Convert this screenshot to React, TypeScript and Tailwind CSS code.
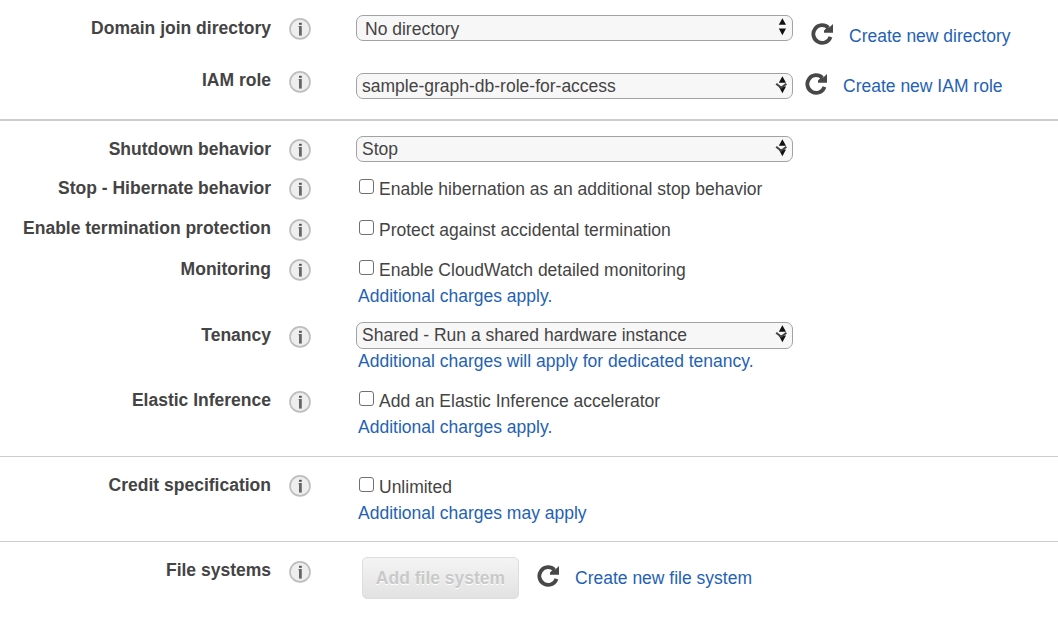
import React from "react";

function InfoIcon({ className }: { className: string }) {
  return (
    <svg className={`ml-[18px] h-[23px] w-[23px] shrink-0 ${className}`} viewBox="0 0 23 23" role="img" aria-label="Info">
      <circle cx="11" cy="10.9" r="10" fill="#eeeeee" stroke="#bebebe" strokeWidth="1.7" />
      <rect x="10" y="4.8" width="2.8" height="2" fill="#555" />
      <path d="M9.2 8h1v1.3h-1z" fill="#aaa" />
      <path d="M10 8h2.8v9.6H10z" fill="#666" />
    </svg>
  );
}

function RefreshIcon({ className }: { className: string }) {
  return (
    <svg className={`h-[23px] w-[23px] shrink-0 ${className}`} viewBox="0 0 23 23" role="img" aria-label="Refresh">
      <path d="M17.4 5.8A8.8 8.8 0 1 0 19.5 14.8" fill="none" stroke="#484848" strokeWidth="3.8" />
      <path d="M22 2V10.7H13V8.6L15.6 6L18.6 5.2z" fill="#484848" />
    </svg>
  );
}

function Select({ children, plain, className }: { children: React.ReactNode; plain?: boolean; className: string }) {
  return (
    <button
      type="button"
      className={`flex w-[437px] shrink-0 items-start justify-between rounded-[7px] border border-[#a2a2a2] bg-[#f7f7f7] pr-[3px] leading-6 ${className}`}
    >
      <span className={plain ? "mt-px" : ""}>{children}</span>
      <svg className="h-[22px] w-[14px] shrink-0" viewBox="0 0 14 22" aria-hidden="true">
        <path d="M7.4 2.3L11 8.8H3.8zM3.8 12.6H11L7.4 19.2z" fill="#111" />
        {!plain && <path d="M1.2 9.7L6.2 13.8L11.4 9.7" fill="none" stroke="#444" strokeWidth="2" />}
      </svg>
    </button>
  );
}

function Check({ children, className }: { children: React.ReactNode; className: string }) {
  return (
    <label className={`flex h-[26px] items-start leading-[26px] ${className}`}>
      <input
        type="checkbox"
        className="mt-[3px] mr-[5px] ml-[3px] h-[15px] w-[15px] shrink-0 appearance-none rounded-[3px] border border-[#707070] bg-white"
      />
      <span>{children}</span>
    </label>
  );
}

function Link({ children, className = "" }: { children: React.ReactNode; className?: string }) {
  return (
    <a href="#" className={`block leading-[26px] text-[#1f62b5] ${className}`}>
      {children}
    </a>
  );
}

function Row({ label, height, icon, children }: { label: string; height: string; icon: string; children: React.ReactNode }) {
  return (
    <div className={`flex items-start ${height}`}>
      <div className="w-[271px] shrink-0 text-right leading-6 font-bold">{label}</div>
      <InfoIcon className={icon} />
      <div className="ml-11 min-w-0 grow">{children}</div>
    </div>
  );
}

export default function App() {
  return (
    <main className="h-[620px] w-[1058px] overflow-hidden bg-white font-['Liberation_Sans',Arial,sans-serif] text-[17.5px] whitespace-nowrap text-[#444]">
      <section className="h-[121px] border-b-2 border-[#ccc] pt-4">
        <Row label="Domain join directory" height="h-[52px]" icon="mt-[2px]">
          <div className="-mt-px flex items-start">
            <Select plain className="h-[26px] pl-2">No directory</Select>
            <RefreshIcon className="mt-[7px] ml-[18px]" />
            <Link className="mt-2 ml-[15px]">Create new directory</Link>
          </div>
        </Row>
        <Row label="IAM role" height="h-[51px]" icon="mt-[3px]">
          <div className="flex items-start pt-[5px]">
            <Select className="h-[26px] pl-[5px]">sample-graph-db-role-for-access</Select>
            <RefreshIcon className="-mt-px ml-3" />
            <Link className="ml-[15px]">Create new IAM role</Link>
          </div>
        </Row>
      </section>

      <section className="h-[336px] border-b border-[#ccc] pt-4">
        <Row label="Shutdown behavior" height="h-[39px]" icon="mt-[2px]">
          <Select className="-mt-px h-[26px] pl-[5px]">Stop</Select>
        </Row>
        <Row label="Stop - Hibernate behavior" height="h-10" icon="mt-[2px]">
          <Check className="">Enable hibernation as an additional stop behavior</Check>
        </Row>
        <Row label="Enable termination protection" height="h-[41px]" icon="mt-[3px]">
          <Check className="mt-px">Protect against accidental termination</Check>
        </Row>
        <Row label="Monitoring" height="h-[66px]" icon="mt-[2px]">
          <Check className="">Enable CloudWatch detailed monitoring</Check>
          <Link className="ml-[2px]">Additional charges apply.</Link>
        </Row>
        <Row label="Tenancy" height="h-[65px]" icon="mt-[3px]">
          <Select className="-mt-px h-[27px] pl-[5px]">Shared - Run a shared hardware instance</Select>
          <Link className="-mt-px ml-[2px]">Additional charges will apply for dedicated tenancy.</Link>
        </Row>
        <Row label="Elastic Inference" height="h-[65px]" icon="mt-[3px]">
          <Check className="">Add an Elastic Inference accelerator</Check>
          <Link className="ml-[2px]">Additional charges apply.</Link>
        </Row>
      </section>

      <section className="h-[85px] border-b border-[#ccc] pt-4">
        <Row label="Credit specification" height="h-[65px]" icon="mt-[2px]">
          <Check className="mt-px">Unlimited</Check>
          <Link className="ml-[2px]">Additional charges may apply</Link>
        </Row>
      </section>

      <section className="pt-4">
        <Row label="File systems" height="h-[60px]" icon="mt-[3px]">
          <div className="-mt-px ml-1.5 flex items-start">
            <button
              type="button"
              disabled
              className="h-[42px] w-[157px] shrink-0 rounded-[5px] border border-[#ddd] bg-linear-to-b from-[#f4f4f4] to-[#e2e2e2] font-bold text-[#c9c9c9] [text-shadow:0_1px_0_#fff]"
            >
              Add file system
            </button>
            <RefreshIcon className="mt-[7px] ml-[18px]" />
            <Link className="mt-2 ml-[15px]">Create new file system</Link>
          </div>
        </Row>
      </section>
    </main>
  );
}
